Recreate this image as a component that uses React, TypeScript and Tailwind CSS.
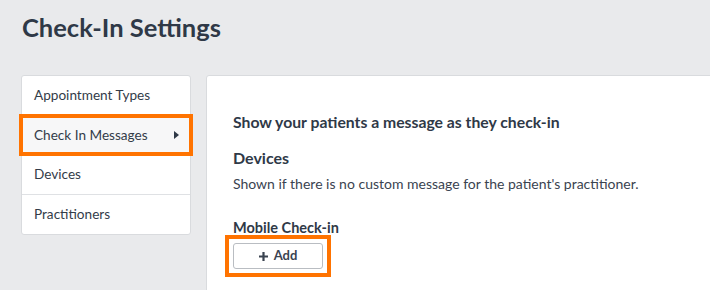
import React from 'react';

const items = ['Appointment Types', 'Check In Messages', 'Devices', 'Practitioners'];

const App = () => {
  return (
    <div
      className="w-[710px] h-[290px] overflow-hidden bg-[#e9eaec] text-[#333c49]"
      style={{ fontFamily: 'Lato, "Open Sans", sans-serif' }}
    >
      <h1 className="pl-[22px] pt-[12px] text-[25.5px] leading-[30px] font-bold text-[#2f3947]">Check-In Settings</h1>

      <div className="flex mt-[33px] gap-[15px] pl-[21px]">
        {/* settings menu */}
        <div className="w-[170px] h-[160px] shrink-0 bg-white border border-[#d9dbde] rounded-[3px] flex flex-col">
          {items.map((label, i) => (
            <div
              key={label}
              className={
                'relative flex items-center justify-between h-[40px] pl-[12px] pr-[10px] text-[13.6px] ' +
                (i < items.length - 1 ? 'border-b border-[#dfe1e4] ' : '') +
                (i === 1 ? 'bg-[#f7f7f8]' : '')
              }
            >
              <span>{label}</span>
              {i === 1 && (
                <>
                  <svg width="5" height="8" viewBox="0 0 5 8" className="mr-[1px]">
                    <path d="M0 0 L5 4 L0 8 Z" fill="#2f3947" />
                  </svg>
                  <div className="absolute -left-[3px] -right-[3px] -top-[2px] -bottom-[2px] border-4 border-[#ff7300]" />
                </>
              )}
            </div>
          ))}
        </div>

        {/* content panel */}
        <div className="flex-1 mr-[-40px] h-[260px] bg-white border border-[#d9dbde] rounded-[3px] pl-[26px] pt-[36px]">
          <h2 className="text-[15.75px] leading-[20px] font-bold text-[#2f3947]">Show your patients a message as they check-in</h2>
          <h3 className="mt-[16px] text-[16px] leading-[20px] font-bold text-[#2f3947]">Devices</h3>
          <p className="mt-[6px] text-[14px] leading-[20px] text-[#3a4350]">
            Shown if there is no custom message for the patient's practitioner.
          </p>
          <h4 className="mt-[24px] text-[14.5px] leading-[20px] font-bold text-[#2f3947]">Mobile Check-in</h4>
          <div className="relative mt-[5px] w-[90px]">
            <button className="w-[90px] h-[26px] flex items-center justify-center gap-[6px] bg-white border border-[#b9bdc2] rounded-[3px] text-[13px] font-bold text-[#3a4350]">
              <svg width="9" height="9" viewBox="0 0 9 9">
                <path d="M4.5 0 V9 M0 4.5 H9" stroke="#3a4350" strokeWidth="2.2" />
              </svg>
              Add
            </button>
            <div className="absolute -left-[8px] -right-[8px] -top-[8px] -bottom-[8px] border-4 border-[#ff7300]" />
          </div>
        </div>
      </div>
    </div>
  );
};

export default App;
